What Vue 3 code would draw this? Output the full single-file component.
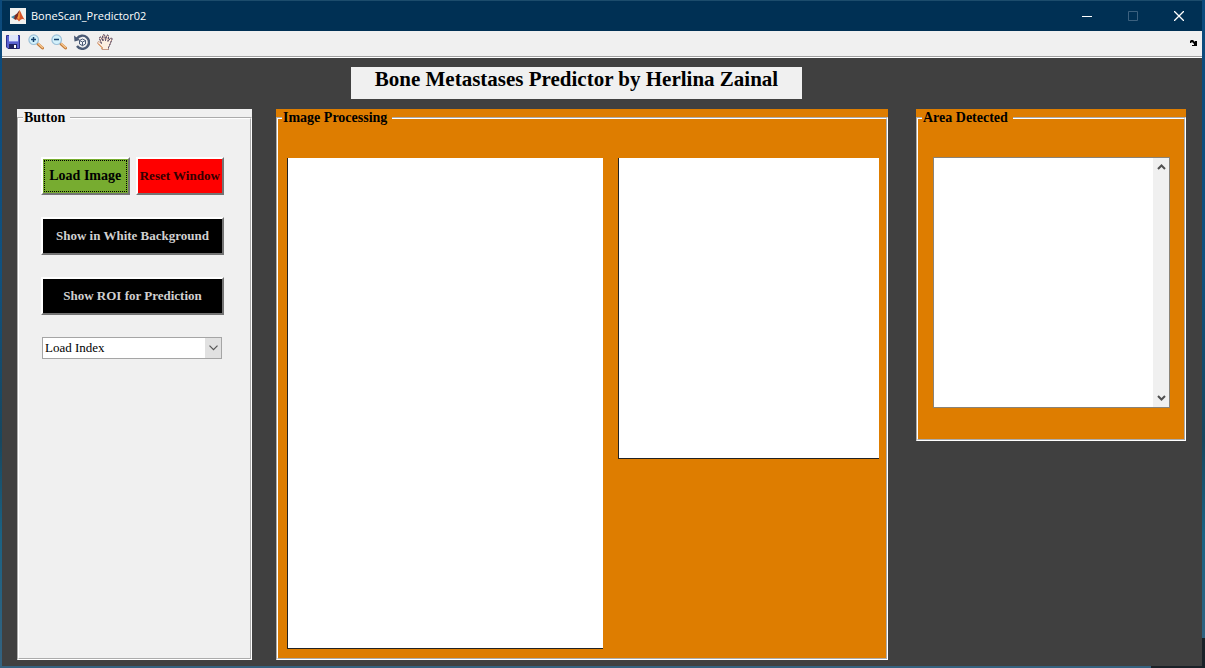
<script setup>
import { ref } from 'vue'

const appName = 'BoneScan_Predictor02'
const loadIndex = ref('Load Index')
</script>

<template>
  <div class="desktop">
    <div class="window">
      <header class="titlebar">
        <svg class="app-icon" width="16" height="16" viewBox="0 0 16 16" aria-hidden="true">
          <rect width="16" height="16" fill="#f1f1ef" />
          <path d="M1 9 L5 7 L7 9 L4 11 Z" fill="#3f87a8" />
          <path d="M5 7 L7 5.500 L9.500 2 L8 9 L6 12 L4 11 Z" fill="#7a2c22" />
          <path d="M9.500 2 C11 4 12.500 9 15 12 C13 10.500 11.500 10.500 9 13.500 C8 12 7 11 6 12 C8 9 8.500 5 9.500 2 Z" fill="#d9552a" />
          <path d="M9.500 3 C10 6 10 9 9 12 C8.500 11 8 10 7.500 10 Z" fill="#f39a3c" />
        </svg>
        <span class="app-name">{{ appName }}</span>
        <button class="caption" type="button" aria-label="Minimize">
          <svg width="10" height="10" viewBox="0 0 10 10"><path d="M0 5.500H10" stroke="#fff" /></svg>
        </button>
        <button class="caption" type="button" aria-label="Maximize" disabled>
          <svg width="10" height="10" viewBox="0 0 10 10"><path d="M.5 .5H9.500V9.500H.5Z" stroke="#3c617f" fill="none" /></svg>
        </button>
        <button class="caption" type="button" aria-label="Close">
          <svg width="10" height="10" viewBox="0 0 10 10"><path d="M0 0L10 10M10 0L0 10" stroke="#fff" stroke-width="1.300" /></svg>
        </button>
      </header>

      <nav class="toolbar" aria-label="Tools">
        <button class="tool" type="button" aria-label="Save">
          <svg width="16" height="16" viewBox="0 0 16 16">
            <path d="M1.500 1.500H14.500V14.500H3L1.500 13Z" fill="#5a62d0" stroke="#2b2d8c" />
            <rect x="4" y="1" width="9" height="7" fill="#dfe6fb" />
            <path d="M4 7.500H13" stroke="#8b93e6" />
            <rect x="4" y="10" width="8" height="5" fill="#20235f" />
            <rect x="9" y="11" width="2" height="3" fill="#fff" />
          </svg>
        </button>
        <button class="tool" type="button" aria-label="Zoom in">
          <svg width="16" height="16" viewBox="0 0 16 16">
            <path d="M10 10L14.500 14" stroke="#c47a35" stroke-width="3" stroke-linecap="round" />
            <path d="M10.500 9.800L14.500 13.500" stroke="#f5c68f" stroke-width="1.500" stroke-linecap="round" />
            <circle cx="5.700" cy="5.700" r="4.800" fill="#d3f1fb" stroke="#9cc0d8" stroke-width="1.200" />
            <path d="M3 5.500H8M5.500 3V8" stroke="#16436f" stroke-width="1.500" />
          </svg>
        </button>
        <button class="tool" type="button" aria-label="Zoom out">
          <svg width="16" height="16" viewBox="0 0 16 16">
            <path d="M10 10L14.500 14" stroke="#c47a35" stroke-width="3" stroke-linecap="round" />
            <path d="M10.500 9.800L14.500 13.500" stroke="#f5c68f" stroke-width="1.500" stroke-linecap="round" />
            <circle cx="5.700" cy="5.700" r="4.800" fill="#d3f1fb" stroke="#9cc0d8" stroke-width="1.200" />
            <path d="M3 5.500H8" stroke="#16436f" stroke-width="1.500" />
          </svg>
        </button>
        <button class="tool" type="button" aria-label="Rotate 3D">
          <svg width="16" height="16" viewBox="0 0 16 16">
            <path d="M3 4.500A6.600 6.600 0 1 1 3 12" fill="none" stroke="#4a5a75" stroke-width="2.400" />
            <path d="M0 1.500L.5 7.500L6 6Z" fill="#4a5a75" />
            <path d="M5.500 6.500L8.500 5L11.500 6.500V10L8.500 11.700L5.500 10ZM5.500 6.500L8.500 8L11.500 6.500M8.500 8V11.700" fill="#f4f6fa" stroke="#4a5a75" />
          </svg>
        </button>
        <button class="tool" type="button" aria-label="Pan">
          <svg width="16" height="16" viewBox="0 0 16 16">
            <path d="M5 15.500V13.500L1 9.500C0 8 1.500 7 2.500 8L4.500 9.500L2.500 4.500C2 3 3.800 2.500 4.400 3.800L6 7L5.700 2C5.700 .5 7.500 .3 7.800 1.700L8.500 6.500L9.600 2C10 .7 11.700 1 11.500 2.500L11 7.300L13.200 4.500C14 3.500 15.500 4.300 14.900 5.500L12.500 11.500L11.500 13.500V15.500Z" fill="#fdeee0" stroke="#c79a86" />
            <path d="M4.500 9.500L2.500 4.500C2 3 3.800 2.500 4.400 3.800L6 7L5.700 2C5.700 .5 7.500 .3 7.800 1.700L8.500 6.500L9.600 2C10 .7 11.700 1 11.500 2.500L11 7.300L13.200 4.500C14 3.500 15.500 4.300 14.900 5.500L12.500 11.500L11.500 13.500V15.500" fill="none" stroke="#3c3c68" stroke-dasharray="2 1" />
            <path d="M5 15V13.500L1 9.500" stroke="#d9823b" fill="none" />
          </svg>
        </button>
        <svg class="dock" width="7" height="6" viewBox="0 0 7 6" aria-hidden="true">
          <path d="M0 1L1 0H3L5 2V1H7V6H2V5H4V4L2 2L1 3H0Z" fill="#000" />
        </svg>
      </nav>

      <main class="figure">
        <h1 class="heading">Bone Metastases Predictor by Herlina Zainal</h1>

        <div class="panels">
          <section class="panel panel-buttons">
            <fieldset>
              <legend>Button</legend>
              <div class="controls">
                <div class="pair">
                  <button class="push load" type="button">Load Image</button>
                  <button class="push reset" type="button">Reset Window</button>
                </div>
                <button class="push dark" type="button">Show in White Background</button>
                <button class="push dark" type="button">Show ROI for Prediction</button>
                <div class="dropdown">
                  <select v-model="loadIndex" aria-label="Load Index">
                    <option>Load Index</option>
                  </select>
                  <svg width="9" height="6" viewBox="0 0 9 6" aria-hidden="true">
                    <path d="M.5 .7L4.500 4.700L8.500 .7" fill="none" stroke="#555" stroke-width="1.200" />
                  </svg>
                </div>
              </div>
            </fieldset>
          </section>

          <section class="panel panel-images">
            <fieldset>
              <legend>Image Processing</legend>
              <div class="axes-row">
                <div class="axes axes-main"></div>
                <div class="axes axes-side"></div>
              </div>
            </fieldset>
          </section>

          <section class="panel panel-area">
            <fieldset>
              <legend>Area Detected</legend>
              <div class="listbox">
                <select size="2" aria-label="Area Detected"></select>
                <div class="scrollbar">
                  <svg width="9" height="6" viewBox="0 0 9 6" aria-hidden="true">
                    <path d="M1 5L4.500 1.500L8 5" fill="none" stroke="#505050" stroke-width="2" />
                  </svg>
                  <svg width="9" height="6" viewBox="0 0 9 6" aria-hidden="true">
                    <path d="M1 1L4.500 4.500L8 1" fill="none" stroke="#505050" stroke-width="2" />
                  </svg>
                </div>
              </div>
            </fieldset>
          </section>
        </div>
      </main>
    </div>
  </div>
</template>

<style>
body {
  margin: 0;
}
</style>

<style scoped>
* {
  box-sizing: border-box;
}

.desktop {
  min-height: 100vh;
  display: flex;
  padding: 0 3px 2px 2px;
  background:
    linear-gradient(#1a2228, #1a2228) right bottom / 54px 30px no-repeat,
    linear-gradient(to bottom, #0c4a7c, #10517f 40%, #17475f 66%, #1b6283 80%, #35627f);
}

.window {
  flex: 1;
  min-width: 0;
  display: flex;
  flex-direction: column;
  background: #404040;
}

.titlebar {
  height: 31px;
  display: flex;
  align-items: center;
  padding-left: 8px;
  border-top: 1px solid #1c4c6c;
  background: #003054;
  color: #fff;
  font: 11px/16px "Open Sans", "Noto Sans", sans-serif;
}

.app-name {
  flex: 1;
  margin-left: 5px;
}

.caption {
  width: 46px;
  height: 30px;
  padding: 0;
  border: 0;
  background: transparent;
  display: flex;
  align-items: center;
  justify-content: center;
}

.toolbar {
  height: 27px;
  display: flex;
  align-items: center;
  gap: 7px;
  padding: 0 5px 4px 3px;
  background: #f0f0f0;
  border-bottom: 1px solid #fff;
  box-shadow: inset 0 -1px #a0a0a0;
}

.tool {
  width: 16px;
  height: 16px;
  padding: 0;
  border: 0;
  background: transparent;
}

.tool svg {
  display: block;
}

.dock {
  margin: 2px 0 0 auto;
}

.figure {
  flex: 1;
  display: flex;
  flex-direction: column;
  padding: 9px 16px 6px 15px;
  font-family: "Liberation Serif", serif;
  color: #000;
}

.heading {
  width: 451px;
  height: 32px;
  margin: 0 0 10px 334px;
  background: #f0f0f0;
  font-size: 21px;
  line-height: 24px;
  font-weight: 700;
  text-align: center;
  white-space: nowrap;
}

.panels {
  flex: 1;
  display: grid;
  grid-template-columns: 235fr 612fr 274fr;
  grid-template-rows: 332fr 219fr;
  column-gap: 24px;
}

.panel {
  display: flex;
  padding-top: 1px;
  background: #de7d00;
}

.panel-buttons,
.panel-images {
  grid-row: 1 / 3;
}

.panel-buttons {
  background: #f0f0f0;
}

.panel fieldset {
  flex: 1;
  min-width: 0;
  display: flex;
  margin: 0;
  padding: 32px 9px 9px;
  border: 2px groove #fff;
}

.panel legend {
  margin-left: -5px;
  padding: 0 5px 0 1px;
  font-size: 14px;
  line-height: 16px;
  font-weight: 700;
}

.panel-buttons fieldset {
  padding-top: 31px;
}

.panel .controls {
  flex: 1;
  display: flex;
  flex-direction: column;
  gap: 22px;
  padding: 0 17px 0 13px;
}

.pair {
  display: flex;
  gap: 6px;
}

.push {
  flex: none;
  height: 38px;
  padding: 0;
  border: 2px solid;
  border-color: #fff #747474 #747474 #fff;
  font: 700 13px/16px "Liberation Serif", serif;
  white-space: nowrap;
}

.pair .push {
  flex: 1 1 0;
}

.pair .load {
  background: #77ac30;
  color: #000;
  font-size: 14px;
  outline: 1px dotted #000;
  outline-offset: -4px;
}

.reset {
  background: #f00;
  color: #300;
}

.dark {
  background: #000;
  color: #d0d0d0;
}

.dropdown {
  display: grid;
  grid-template-columns: 1fr 16px;
  align-items: center;
  margin: 0 2px 0 1px;
  height: 22px;
  border: 1px solid #a5a5a5;
  background: linear-gradient(to left, #e1e1e1 16px, #fff 16px);
}

.dropdown select {
  grid-area: 1 / 1 / 2 / 3;
  height: 20px;
  padding: 0 18px 0 2px;
  border: 0;
  background: transparent;
  appearance: none;
  color: #000;
  font: 13px/16px "Liberation Serif", serif;
}

.dropdown svg {
  grid-area: 1 / 2;
  justify-self: center;
  pointer-events: none;
}

.axes-row {
  flex: 1;
  display: grid;
  grid-template-columns: 316fr 261fr;
  grid-template-rows: 301fr 190fr;
  column-gap: 15px;
}

.panel-images fieldset {
  padding-right: 7px;
}

.axes {
  background: #fff;
  border-left: 1px solid #222;
  border-bottom: 1px solid #222;
}

.axes-main {
  grid-row: 1 / 3;
}

.panel-area {
  margin-left: 4px;
}

.panel-area fieldset {
  padding: 31px 14px 31px 15px;
}

.panel-area legend {
  margin-left: -11px;
}

.listbox {
  flex: 1;
  display: flex;
  border: 1px solid #8a8377;
  background: #fff;
}

.listbox select {
  flex: 1;
  min-width: 0;
  height: auto;
  border: 0;
  border-radius: 0;
  background: #fff;
  appearance: none;
  overflow: hidden;
}

.scrollbar {
  width: 16px;
  display: flex;
  flex-direction: column;
  justify-content: space-between;
  align-items: center;
  padding: 6px 0;
  background: #f0f0f0;
}
</style>
